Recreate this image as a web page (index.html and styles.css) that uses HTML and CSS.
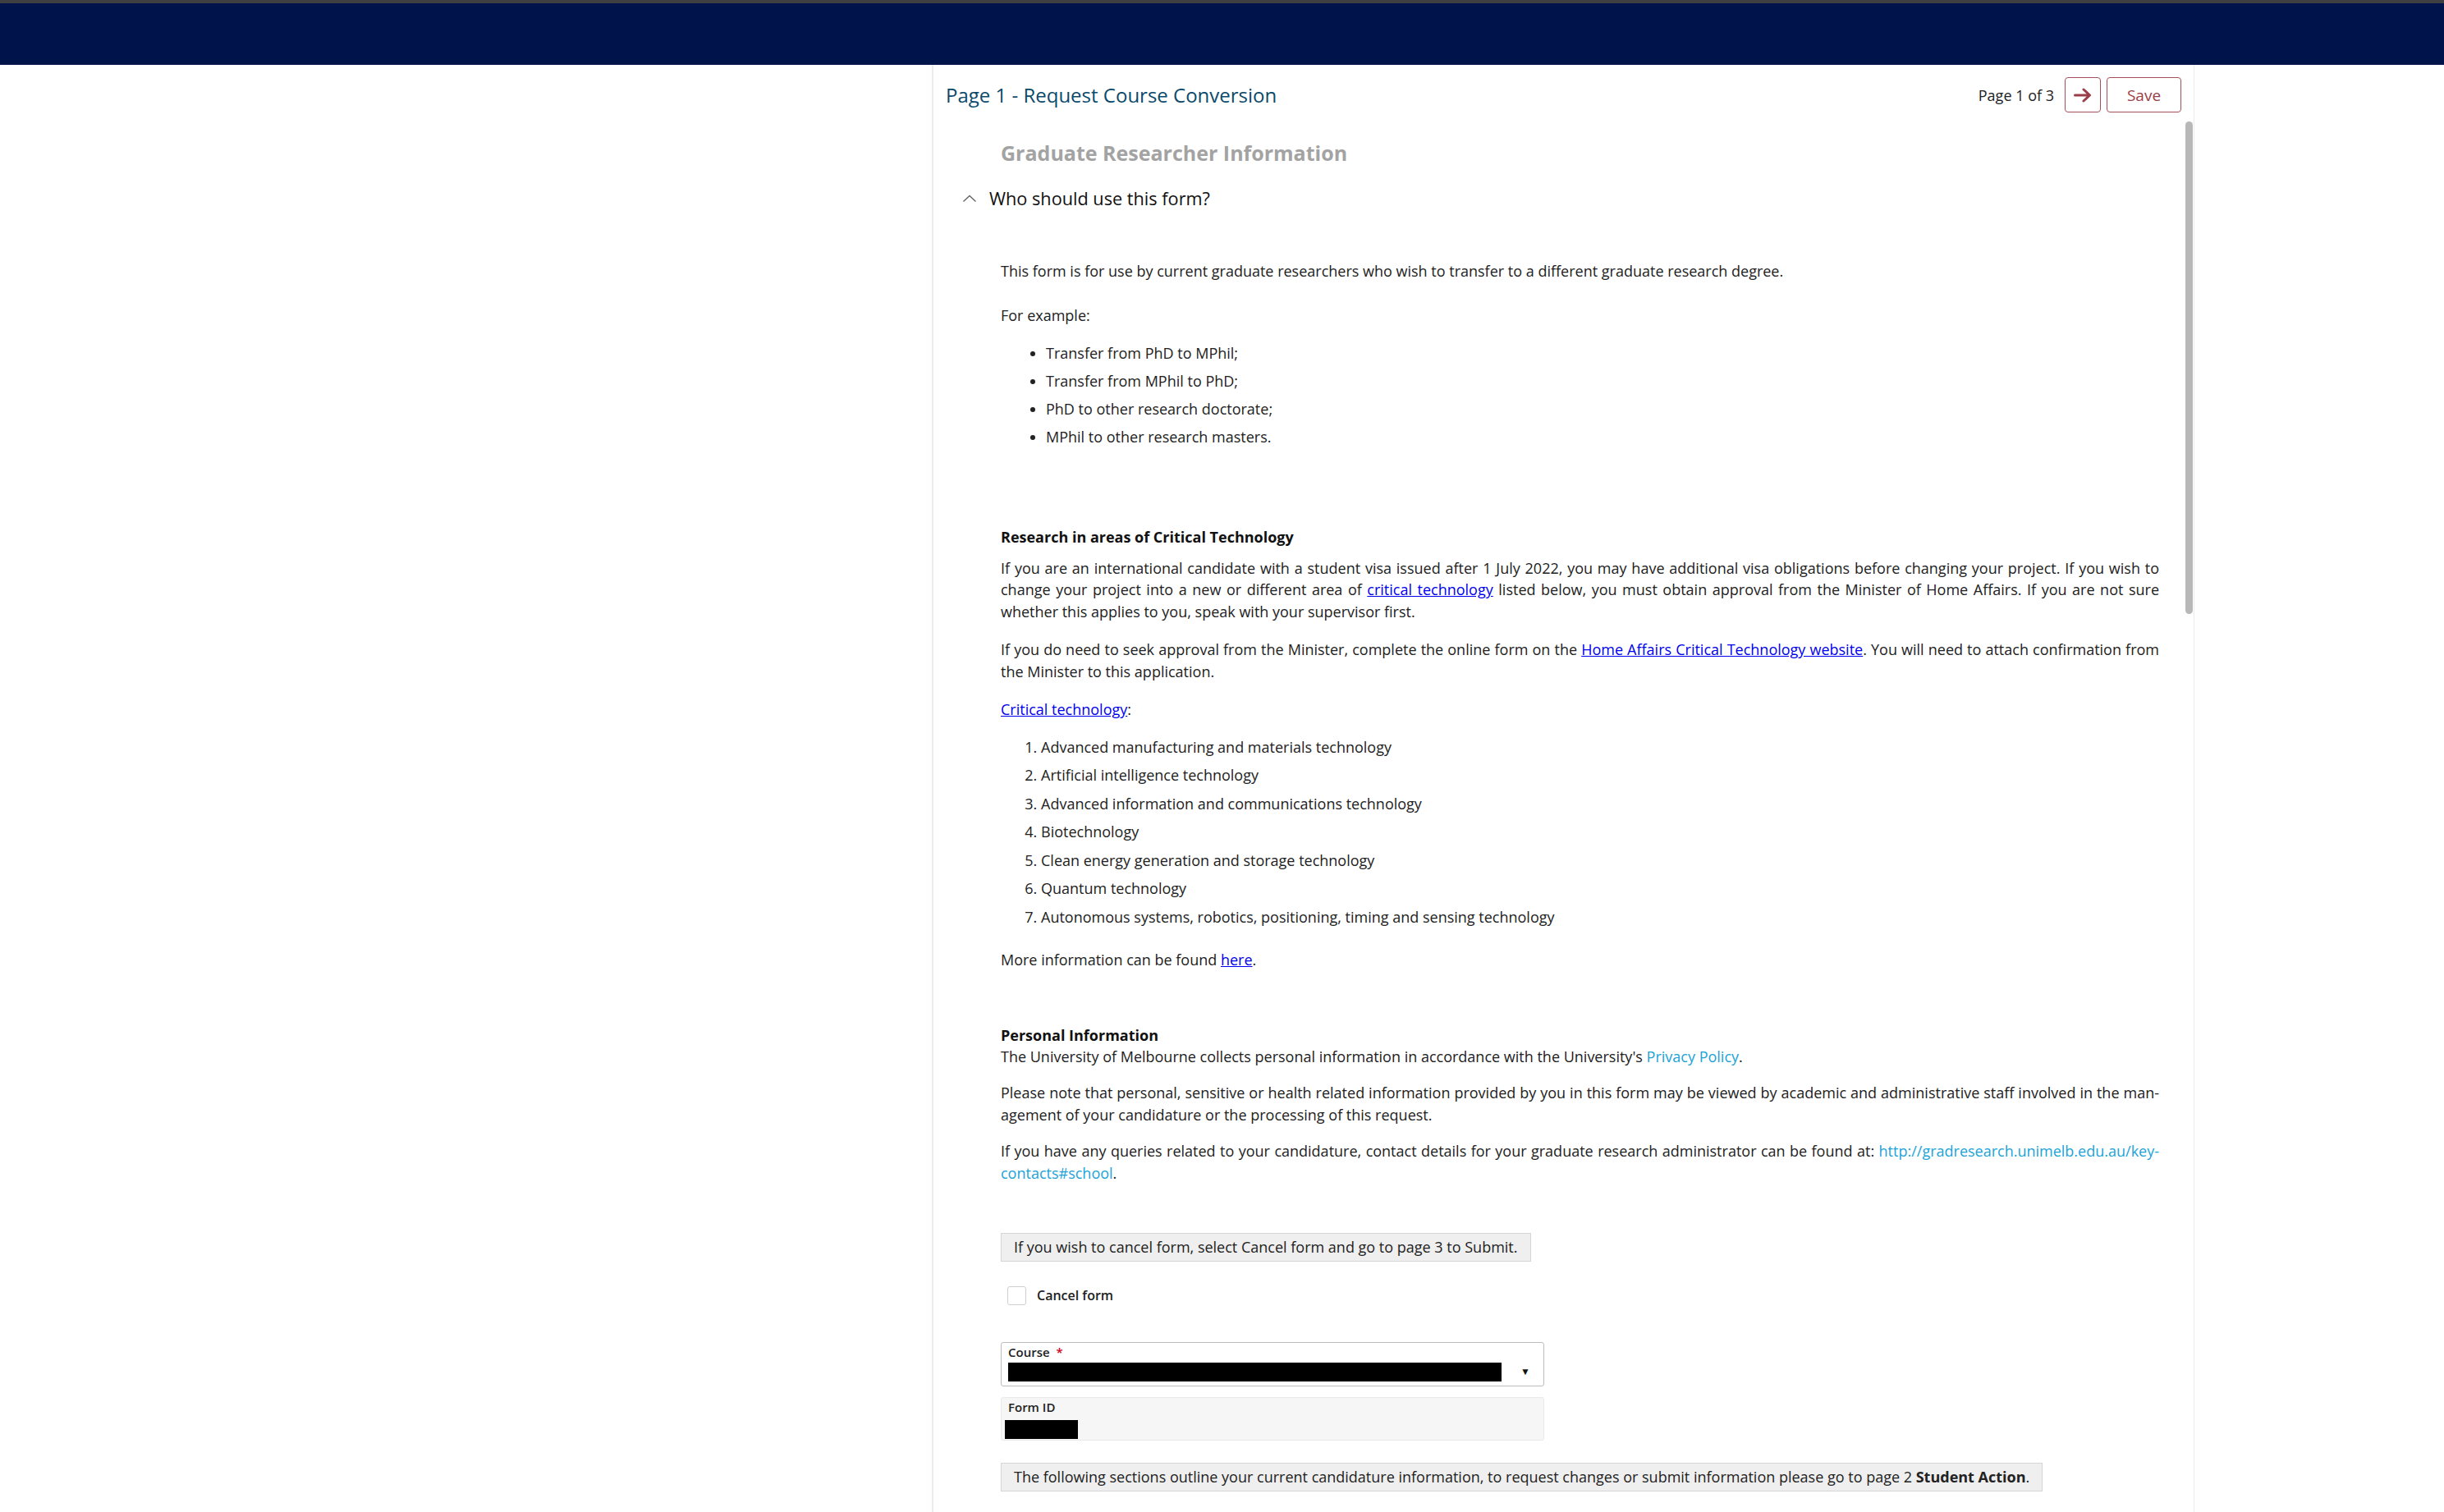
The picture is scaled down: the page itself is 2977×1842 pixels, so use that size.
FILE: index.html
```html
<!DOCTYPE html>
<html lang="en">
<head>
<meta charset="utf-8">
<title>Request Course Conversion</title>
<link rel="stylesheet" href="styles.css">
</head>
<body>
<header class="topbar"></header>
<div class="layout">
  <aside class="sidebar"></aside>
  <section class="panel">
    <div class="panel-head">
      <h1 class="page-title">Page 1 - Request Course Conversion</h1>
      <div class="pager">
        <span class="pager-label">Page 1 of 3</span>
        <button class="btn btn-icon" type="button" aria-label="Next page">
          <svg width="22" height="18" viewBox="0 0 22 18"><path d="M1.5 9H19M12 2l7.5 7-7.5 7" fill="none" stroke="currentColor" stroke-width="3" stroke-linecap="round" stroke-linejoin="round"/></svg>
        </button>
        <button class="btn btn-save" type="button">Save</button>
      </div>
    </div>
    <div class="panel-body">
      <div class="scroll-thumb"></div>
      <h2 class="section-title">Graduate Researcher Information</h2>
      <div class="accordion">
        <div class="accordion-head">
          <svg class="chevron" width="18" height="10" viewBox="0 0 18 10"><path d="M1.5 8.5L9 1.5l7.5 7" fill="none" stroke="currentColor" stroke-width="1.4"/></svg>
          <span>Who should use this form?</span>
        </div>
        <div class="accordion-body">
          <p class="intro">This form is for use by current graduate researchers who wish to transfer to a different graduate research degree.</p>
          <p class="lead">For example:</p>
          <ul class="bullets">
            <li>Transfer from PhD to MPhil;</li>
            <li>Transfer from MPhil to PhD;</li>
            <li>PhD to other research doctorate;</li>
            <li>MPhil to other research masters.</li>
          </ul>

          <h3 class="block-title tech-title">Research in areas of Critical Technology</h3>
          <p class="just">If you are an international candidate with a student visa issued after 1 July 2022, you may have additional visa obligations before changing your project. If you wish to change your project into a new or different area of <a href="#">critical technology</a> listed below, you must obtain approval from the Minister of Home Affairs. If you are not sure whether this applies to you, speak with your supervisor first.</p>
          <p class="just">If you do need to seek approval from the Minister, complete the online form on the <a href="#">Home Affairs Critical Technology website</a>. You will need to attach confirmation from the Minister to this application.</p>
          <p><a href="#">Critical technology</a>:</p>
          <ol class="numbers">
            <li>Advanced manufacturing and materials technology</li>
            <li>Artificial intelligence technology</li>
            <li>Advanced information and communications technology</li>
            <li>Biotechnology</li>
            <li>Clean energy generation and storage technology</li>
            <li>Quantum technology</li>
            <li>Autonomous systems, robotics, positioning, timing and sensing technology</li>
          </ol>
          <p class="more">More information can be found <a href="#">here</a>.</p>

          <div class="privacy">
            <h3 class="block-title">Personal Information</h3>
            <p>The University of Melbourne collects personal information in accordance with the University's <a class="soft-link" href="#">Privacy Policy</a>.</p>
            <p class="just">Please note that personal, sensitive or health related information provided by you in this form may be viewed by academic and administrative staff involved in the man&shy;agement of your candidature or the processing of this request.</p>
            <p class="just">If you have any queries related to your candidature, contact details for your graduate research administrator can be found at: <a class="soft-link" href="#">http://gradresearch.unimelb.edu.au/key-contacts#school</a>.</p>
          </div>

          <div class="notice notice-cancel">If you wish to cancel form, select Cancel form and go to page 3 to Submit.</div>

          <label class="check">
            <span class="check-box"></span>
            <span class="check-label">Cancel form</span>
          </label>

          <div class="field field-select">
            <div class="field-label">Course <span class="req">*</span></div>
            <div class="field-row">
              <span class="redacted redacted-wide"></span>
              <span class="caret">&#9660;</span>
            </div>
          </div>

          <div class="field field-readonly">
            <div class="field-label">Form ID</div>
            <span class="redacted redacted-short"></span>
          </div>

          <div class="notice notice-info">The following sections outline your current candidature information, to request changes or submit information please go to page 2 <strong>Student Action</strong>.</div>
        </div>
      </div>
    </div>
  </section>
</div>
</body>
</html>
```

FILE: styles.css
```css
* { box-sizing: border-box; }

html, body {
  margin: 0;
  height: 100%;
  overflow: hidden;
  background: #fff;
  font-family: "Open Sans", "Noto Sans", "Liberation Sans", sans-serif;
  color: #222;
}

.topbar {
  height: 79px;
  background: #00134a;
  border-top: 4px solid #3f3f42;
}

.layout {
  display: grid;
  grid-template-columns: 1135px 1538px;
  height: calc(100% - 79px);
}

.panel {
  position: relative;
  display: flex;
  flex-direction: column;
  border-left: 2px solid #ececec;
  border-right: 1px solid #ececec;
  overflow: hidden;
}

/* header row with title and paging controls */
.panel-head {
  height: 69px;
  padding: 4px 15px 0 15px;
  display: flex;
  align-items: center;
  justify-content: space-between;
  flex: none;
}

.page-title {
  margin: 0;
  font-size: 24px;
  font-weight: 400;
  color: #0b4a6b;
}

.pager {
  display: flex;
  align-items: center;
  gap: 7px;
}

.pager-label {
  font-size: 18px;
  color: #222;
  margin-right: 6px;
}

.btn {
  height: 43px;
  border: 1px solid #a3505c;
  border-radius: 4px;
  background: #fff;
  color: #9a3e4a;
  font-family: inherit;
  font-size: 19px;
  padding: 0;
  display: inline-flex;
  align-items: center;
  justify-content: center;
}

.btn-icon { width: 44px; }
.btn-save { width: 91px; }

/* scrolling content area */
.panel-body {
  position: relative;
  flex: 1;
  padding: 0 42px 0 82px;
}

.scroll-thumb {
  position: absolute;
  top: 0;
  right: 1px;
  width: 9px;
  height: 600px;
  border-radius: 5px;
  background: #b8b8b8;
}

.section-title {
  margin: 22px 0 0;
  font-size: 25px;
  line-height: 32px;
  font-weight: 700;
  color: #a3a3a3;
}

.accordion-head {
  margin: 26px 0 0 -47px;
  display: flex;
  align-items: center;
  gap: 15px;
  font-size: 21.7px;
  line-height: 28px;
  color: #111;
}

.chevron { color: #666; }

.accordion-body {
  font-size: 18px;
  line-height: 26.5px;
  color: #222;
}

.accordion-body p { margin: 20px 0 0; }

.accordion-body .intro { margin-top: 61px; }
.accordion-body .lead { margin-top: 27px; }

.just { text-align: justify; }

.bullets {
  margin: 20px 0 0;
  padding-left: 55px;
}

.bullets li + li { margin-top: 7.6px; }
.numbers li + li { margin-top: 8px; }

.block-title {
  margin: 0;
  font-size: 18px;
  line-height: 26px;
  font-weight: 700;
  color: #111;
}

.tech-title { margin-top: 95px; }

.accordion-body .tech-title + p { margin-top: 12px; }

.numbers {
  margin: 19px 0 0;
  padding-left: 49px;
}

.accordion-body .more { margin-top: 26px; }

a { color: #0000ee; }

.soft-link {
  color: #1ba3d8;
  text-decoration: none;
}

.privacy { margin-top: 65px; }

.accordion-body .privacy p { margin-top: 18px; }
.accordion-body .privacy .block-title + p { margin-top: 0; }

.notice {
  display: inline-block;
  background: #efefef;
  border: 1px solid #d5d5d5;
  padding: 0 15px;
  line-height: 33px;
  font-size: 18px;
  color: #222;
}

.notice-cancel { margin-top: 60px; }

.check {
  display: flex;
  align-items: center;
  gap: 13px;
  margin: 28px 0 0 8px;
}

.check-box {
  width: 23px;
  height: 23px;
  border: 1px solid #cfcfcf;
  border-radius: 3px;
  background: #fff;
}

.check-label {
  font-size: 16px;
  font-weight: 600;
  color: #222;
}

.field {
  width: 662px;
  border-radius: 3px;
}

.field-select {
  margin-top: 43px;
  height: 54px;
  border: 1px solid #bdbdbd;
  padding: 0 8px;
}

.field-readonly {
  margin-top: 13px;
  height: 53px;
  border: 1px solid #e9e9e9;
  background: #f6f6f6;
  padding: 0 8px 0 4px;
}

.field-label {
  font-size: 15px;
  line-height: 22px;
  font-weight: 600;
  color: #222;
}

.field-readonly .field-label { padding-left: 4px; }

.req { color: #d0021b; margin-left: 4px; }

.field-row {
  display: flex;
  align-items: center;
  justify-content: space-between;
}

.redacted {
  display: block;
  background: #000;
  height: 23px;
}

.redacted-wide { width: 601px; }
.redacted-short { width: 89px; margin-top: 5px; }

.caret {
  font-size: 12px;
  color: #111;
  margin-right: 8px;
}

.notice-info { margin-top: 27px; }

.notice-info strong { font-weight: 700; }
```
